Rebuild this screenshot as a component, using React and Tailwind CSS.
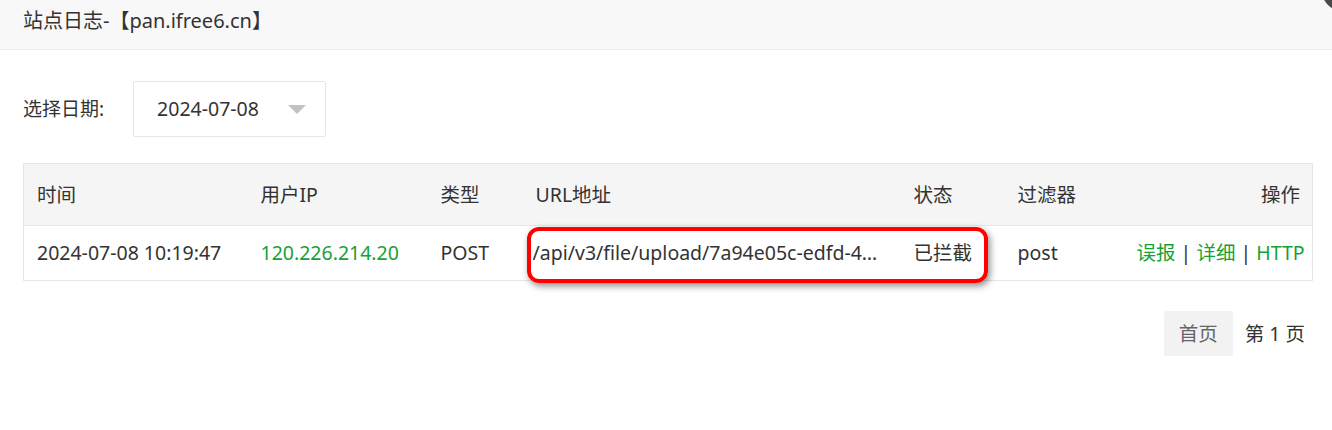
const rows = [
    {
        time: "2024-07-08 10:19:47",
        ip: "120.226.214.20",
        method: "POST",
        url: "/api/v3/file/upload/7a94e05c-edfd-4a2b-9c1e-5f3d8b6a0e71",
        status: "已拦截",
        filter: "post",
    },
];

const App = () => {
    return (
        <div
            className="relative w-[1332px] h-[430px] overflow-hidden bg-white text-[#333]"
            style={{ fontFamily: '"Noto Sans", "Noto Sans CJK SC", sans-serif' }}
        >
            {/* Title bar */}
            <div className="h-[50px] bg-[#f8f8f8] border-b border-[#eee] pl-[23px] flex items-center">
                <span className="text-[20px] leading-none -mt-[8px]">站点日志-【pan.ifree6.cn】</span>
            </div>
            {/* close button corner */}
            <div className="absolute -right-[37px] -top-[36px] w-[48px] h-[48px] rounded-full bg-[#4a4a4a]"></div>

            <div className="px-[23px] pt-[31px]">
                {/* Date picker */}
                <div className="flex items-center">
                    <span className="text-[19px]">选择日期:</span>
                    <div className="ml-[29px] w-[193px] h-[56px] border border-[#e6e6e6] rounded-[2px] flex items-center justify-between pl-[23px] pr-[19px]">
                        <span className="text-[19.5px]">2024-07-08</span>
                        <span className="w-0 h-0 border-l-[9px] border-r-[9px] border-t-[9px] border-l-transparent border-r-transparent border-t-[#c2c2c2]"></span>
                    </div>
                </div>

                {/* Table */}
                <table className="mt-[26px] w-[1290px] border border-[#e6e6e6] border-collapse table-fixed text-[19.5px]">
                    <colgroup>
                        <col className="w-[224px]" />
                        <col className="w-[180px]" />
                        <col className="w-[95px]" />
                        <col className="w-[378px]" />
                        <col className="w-[104px]" />
                        <col className="w-[120px]" />
                        <col />
                    </colgroup>
                    <thead>
                        <tr className="h-[62px] bg-[#f5f5f5] border-b border-[#e6e6e6]">
                            <th className="font-normal text-left px-[13px]">时间</th>
                            <th className="font-normal text-left px-[13px]">用户IP</th>
                            <th className="font-normal text-left px-[13px]">类型</th>
                            <th className="font-normal text-left px-[13px]">URL地址</th>
                            <th className="font-normal text-left px-[13px]">状态</th>
                            <th className="font-normal text-left px-[13px]">过滤器</th>
                            <th className="font-normal text-right px-[12px]">操作</th>
                        </tr>
                    </thead>
                    <tbody>
                        {rows.map((row, index) => (
                            <tr key={index} className="h-[55px]">
                                <td className="px-[13px] whitespace-nowrap">{row.time}</td>
                                <td className="px-[13px] text-[#16a134]">{row.ip}</td>
                                <td className="px-[13px]">{row.method}</td>
                                <td className="pl-[10px] pr-[13px] relative">
                                    <div className="truncate">{row.url}</div>
                                    {/* highlight annotation */}
                                    <div className="absolute left-[4px] top-[1px] w-[461px] h-[56px] border-[4px] border-[#ff0000] rounded-[12px] shadow-[2px_3px_7px_rgba(0,0,0,0.45)]"></div>
                                </td>
                                <td className="px-[13px] whitespace-nowrap">{row.status}</td>
                                <td className="px-[13px]">{row.filter}</td>
                                <td className="px-[12px] text-right text-[#16a134] whitespace-nowrap">
                                    误报 <span className="text-[#333]">|</span> 详细 <span className="text-[#333]">|</span> HTTP
                                </td>
                            </tr>
                        ))}
                    </tbody>
                </table>

                {/* Pagination */}
                <div className="mt-[30px] flex items-center justify-end pr-[4px] text-[19.5px]">
                    <span className="h-[45px] w-[69px] bg-[#f2f2f2] rounded-[2px] flex items-center justify-center text-[#666]">首页</span>
                    <span className="ml-[12px]">第 1 页</span>
                </div>
            </div>
        </div>
    );
};

export default App;
